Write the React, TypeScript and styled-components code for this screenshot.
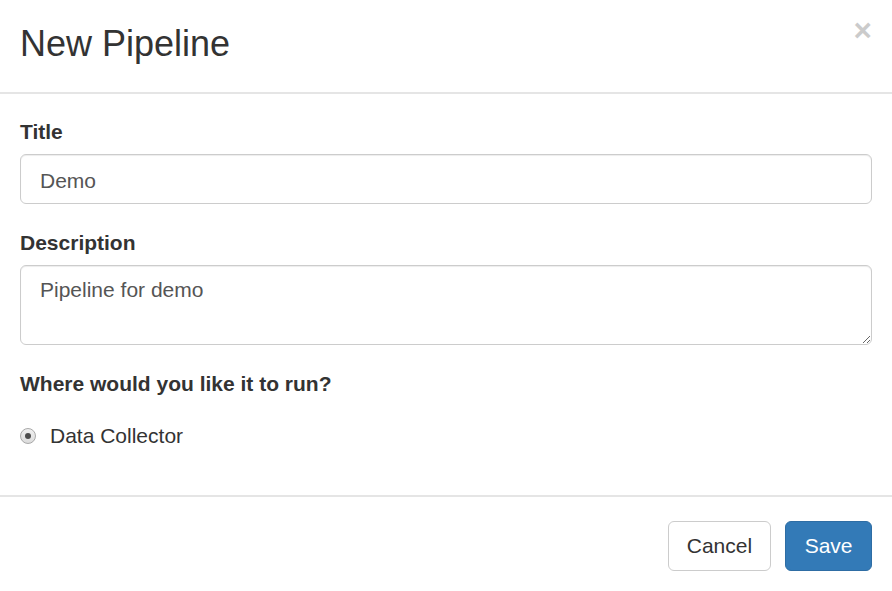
import React from "react";
import styled, { createGlobalStyle } from "styled-components";

const Global = createGlobalStyle`
  html, body { margin: 0; padding: 0; background: #fff; }
  body { font-family: "Liberation Sans", Arial, sans-serif; color: #333; }
  * { box-sizing: border-box; }
`;

const Modal = styled.div`
  width: 892px;
  background: #fff;
`;

const Header = styled.div`
  display: flex;
  justify-content: space-between;
  align-items: flex-start;
  height: 94px;
  padding: 14px 20px 0 20px;
  border-bottom: 2px solid #e5e5e5;
`;

const Title = styled.h4`
  margin: 0;
  font-size: 36px;
  font-weight: 400;
  line-height: 60px;
  color: #333;
`;

const Close = styled.button`
  margin: 1px 0 0;
  padding: 0;
  border: 0;
  background: transparent;
  font-family: "Liberation Sans", Arial, sans-serif;
  font-size: 31.5px;
  font-weight: 700;
  line-height: 1;
  color: #000;
  opacity: 0.2;
  cursor: pointer;
`;

const Body = styled.div`
  padding: 23px 20px 44px;
  border-bottom: 2px solid #e5e5e5;
`;

const Group = styled.div`
  display: flex;
  flex-direction: column;
  margin-bottom: 24px;
`;

const Label = styled.label`
  display: block;
  font-size: 21px;
  font-weight: 700;
  line-height: 30px;
  color: #333;
  margin-bottom: 7px;
`;

const fieldBase = `
  width: 100%;
  font-family: "Liberation Sans", Arial, sans-serif;
  font-size: 21px;
  color: #555;
  background: #fff;
  border: 1px solid #ccc;
  border-radius: 6px;
  box-shadow: inset 0 1px 1px rgba(0,0,0,.075);
  outline: none;
`;

const Input = styled.input`
  ${fieldBase}
  height: 50px;
  padding: 11px 19px 8px;
`;

const TextArea = styled.textarea`
  ${fieldBase}
  height: 80px;
  padding: 9px 19px;
  line-height: 30px;
  resize: vertical;
  display: block;
`;

const RadioRow = styled.label`
  display: flex;
  align-items: center;
  gap: 14px;
  margin-top: 22px;
  font-size: 21px;
  line-height: 30px;
  color: #333;
`;

const RadioDot = styled.span`
  width: 16px;
  height: 16px;
  border-radius: 50%;
  border: 1px solid #a9a9a9;
  background: linear-gradient(#f0f0f0, #dcdcdc);
  display: flex;
  align-items: center;
  justify-content: center;
  &::after {
    content: "";
    width: 6px;
    height: 6px;
    border-radius: 50%;
    background: #4d4d4d;
  }
`;

const Footer = styled.div`
  display: flex;
  justify-content: flex-end;
  gap: 14px;
  padding: 24px 20px 20px;
`;

const Button = styled.button<{ $primary?: boolean }>`
  height: 50px;
  padding: 0 ${(p) => (p.$primary ? "18.5px" : "18px")};
  font-family: "Liberation Sans", Arial, sans-serif;
  font-size: 21px;
  line-height: 30px;
  border-radius: 6px;
  border: 1px solid ${(p) => (p.$primary ? "#2e6da4" : "#ccc")};
  background: ${(p) => (p.$primary ? "#337ab7" : "#fff")};
  color: ${(p) => (p.$primary ? "#fff" : "#333")};
  cursor: pointer;
`;

export default function App() {
  return (
    <>
      <Global />
      <Modal>
        <Header>
          <Title>New Pipeline</Title>
          <Close aria-label="Close">×</Close>
        </Header>
        <Body>
          <Group>
            <Label>Title</Label>
            <Input defaultValue="Demo" />
          </Group>
          <Group>
            <Label>Description</Label>
            <TextArea defaultValue="Pipeline for demo" />
          </Group>
          <Label>Where would you like it to run?</Label>
          <RadioRow>
            <RadioDot />
            Data Collector
          </RadioRow>
        </Body>
        <Footer>
          <Button>Cancel</Button>
          <Button $primary>Save</Button>
        </Footer>
      </Modal>
    </>
  );
}
